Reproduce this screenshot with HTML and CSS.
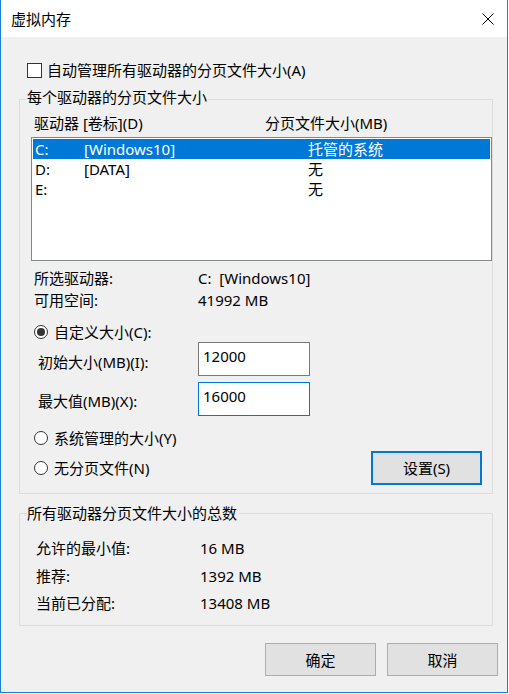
FILE: index.html
```html
<!DOCTYPE html>
<html lang="zh-CN">
<head>
    <meta charset="UTF-8">
    <meta name="viewport" content="width=device-width, initial-scale=1.0">
    <title>虚拟内存</title>
    <link rel="stylesheet" href="styles.css">
</head>
<body>
    <div class="window">
        <div class="titlebar">
            <span class="titlebar__text">虚拟内存</span>
            <svg class="titlebar__close" width="12" height="12" viewBox="0 0 12 12">
                <path d="M0.5 0.5 L11.5 11.5 M11.5 0.5 L0.5 11.5" stroke="#000" stroke-width="1" fill="none"/>
            </svg>
        </div>
        <div class="content">
            <div class="check-row">
                <span class="checkbox"></span>
                <span>自动管理所有驱动器的分页文件大小(A)</span>
            </div>

            <div class="group group--drives">
                <div class="group__title">每个驱动器的分页文件大小</div>
                <div class="list-head">
                    <span class="list-head__drive">驱动器 [卷标](D)</span>
                    <span>分页文件大小(MB)</span>
                </div>
                <div class="listbox">
                    <div class="listbox__row is-selected">
                        <span>C:</span><span>[Windows10]</span><span>托管的系统</span>
                    </div>
                    <div class="listbox__row">
                        <span>D:</span><span>[DATA]</span><span>无</span>
                    </div>
                    <div class="listbox__row">
                        <span>E:</span><span></span><span>无</span>
                    </div>
                </div>
                <div class="info-row info-row--first">
                    <span class="info-row__label">所选驱动器:</span>
                    <span>C:&nbsp; [Windows10]</span>
                </div>
                <div class="info-row info-row--next">
                    <span class="info-row__label">可用空间:</span>
                    <span>41992 MB</span>
                </div>
                <div class="radio-row radio-row--custom">
                    <span class="radio is-checked"></span>
                    <span>自定义大小(C):</span>
                </div>
                <div class="field-row">
                    <span class="field-row__label">初始大小(MB)(I):</span>
                    <div class="textbox">12000</div>
                </div>
                <div class="field-row field-row--max">
                    <span class="field-row__label">最大值(MB)(X):</span>
                    <div class="textbox is-focused">16000</div>
                </div>
                <div class="radio-row radio-row--system">
                    <span class="radio"></span>
                    <span>系统管理的大小(Y)</span>
                </div>
                <div class="radio-row radio-row--none">
                    <span class="radio"></span>
                    <span>无分页文件(N)</span>
                    <button class="btn btn--default btn--set">设置(S)</button>
                </div>
            </div>

            <div class="group group--total">
                <div class="group__title">所有驱动器分页文件大小的总数</div>
                <div class="total-row total-row--first">
                    <span class="total-row__label">允许的最小值:</span>
                    <span>16 MB</span>
                </div>
                <div class="total-row total-row--second">
                    <span class="total-row__label">推荐:</span>
                    <span>1392 MB</span>
                </div>
                <div class="total-row total-row--third">
                    <span class="total-row__label">当前已分配:</span>
                    <span>13408 MB</span>
                </div>
            </div>
        </div>
        <div class="footer">
            <button class="btn">确定</button>
            <button class="btn">取消</button>
        </div>
    </div>
</body>
</html>
```

FILE: styles.css
```css
* {
    box-sizing: border-box;
}
body {
    margin: 0;
    padding: 0;
    background: #ffffff;
    font-family: "Noto Sans", "Noto Sans CJK SC", sans-serif;
    font-size: 15px;
    color: #000000;
}
.window {
    width: 508px;
    height: 693px;
    background: #f0f0f0;
    border: 1px solid #1a7fd6;
    border-top: none;
}
.titlebar {
    height: 37px;
    background: #ffffff;
    display: flex;
    align-items: center;
    padding-left: 10px;
    padding-right: 13px;
}
.titlebar__text {
    flex: 1;
    line-height: 20px;
}
.titlebar__close {
    display: block;
}
.content {
    padding: 0 14px 0 18px;
}
.check-row {
    display: flex;
    align-items: center;
    height: 20px;
    line-height: 20px;
    margin-top: 23px;
    margin-left: 8px;
}
.checkbox {
    width: 15px;
    height: 15px;
    border: 1px solid #333333;
    background: #ffffff;
    margin-right: 5px;
}
.group {
    border: 1px solid #dcdcdc;
}
.group--drives {
    margin-top: 19px;
    padding: 0 0 8px 11px;
}
.group--total {
    margin-top: 19px;
    padding: 0 0 12px 16px;
}
.group__title {
    width: fit-content;
    line-height: 20px;
    background: #f0f0f0;
    padding: 0 1px;
    margin-top: -13px;
    margin-left: -5px;
}
.group--total .group__title {
    margin-top: -11px;
    margin-left: -10px;
}
.list-head {
    display: flex;
    line-height: 20px;
    margin-top: 6px;
    padding-left: 3px;
}
.list-head__drive {
    width: 231px;
}
.listbox {
    margin-top: 4px;
    height: 124px;
    background: #ffffff;
    border: 1px solid #828790;
    padding: 1px;
}
.listbox__row {
    display: grid;
    grid-template-columns: 49px 224px 1fr;
    height: 20px;
    line-height: 20px;
    padding-left: 2px;
}
.listbox__row.is-selected {
    background: #0078d7;
    color: #ffffff;
}
.info-row {
    display: flex;
    line-height: 20px;
    padding-left: 3px;
}
.info-row--first {
    margin-top: 7px;
}
.info-row--next {
    margin-top: 2px;
}
.info-row__label {
    width: 164px;
}
.radio-row {
    display: flex;
    align-items: center;
    line-height: 20px;
    padding-left: 3px;
}
.radio-row--custom {
    margin-top: 12px;
}
.radio-row--system {
    margin-top: 12px;
}
.radio-row--none {
    margin-top: 3px;
    height: 34px;
}
.radio {
    width: 14px;
    height: 14px;
    border: 1px solid #333333;
    border-radius: 50%;
    background: #ffffff;
    margin-right: 6px;
    display: flex;
    align-items: center;
    justify-content: center;
}
.radio.is-checked::after {
    content: "";
    width: 8px;
    height: 8px;
    border-radius: 50%;
    background: #333333;
}
.field-row {
    display: flex;
    align-items: flex-start;
    padding-left: 7px;
}
.field-row--max {
    margin-top: 6px;
}
.field-row__label {
    width: 160px;
    line-height: 20px;
    margin-top: 10px;
}
.field-row--max .field-row__label {
    margin-top: 9px;
}
.textbox {
    width: 112px;
    height: 34px;
    background: #ffffff;
    border: 1px solid #7a7a7a;
    padding: 3px 4px 0;
    line-height: 20px;
}
.textbox.is-focused {
    border-color: #0078d7;
}
.btn {
    width: 111px;
    height: 33px;
    background: #e1e1e1;
    border: 1px solid #adadad;
    font-family: inherit;
    font-size: 15px;
    color: #000000;
    padding: 0;
    line-height: 20px;
}
.btn--default {
    border: 2px solid #0078d7;
}
.btn--set {
    height: 34px;
    margin-left: auto;
    margin-right: 10px;
}
.total-row {
    display: flex;
    line-height: 20px;
}
.total-row--first {
    margin-top: 15px;
}
.total-row--second {
    margin-top: 8px;
}
.total-row--third {
    margin-top: 7px;
}
.total-row__label {
    width: 164px;
}
.footer {
    display: flex;
    justify-content: flex-end;
    gap: 11px;
    margin-top: 17px;
    padding-right: 9px;
}
```
